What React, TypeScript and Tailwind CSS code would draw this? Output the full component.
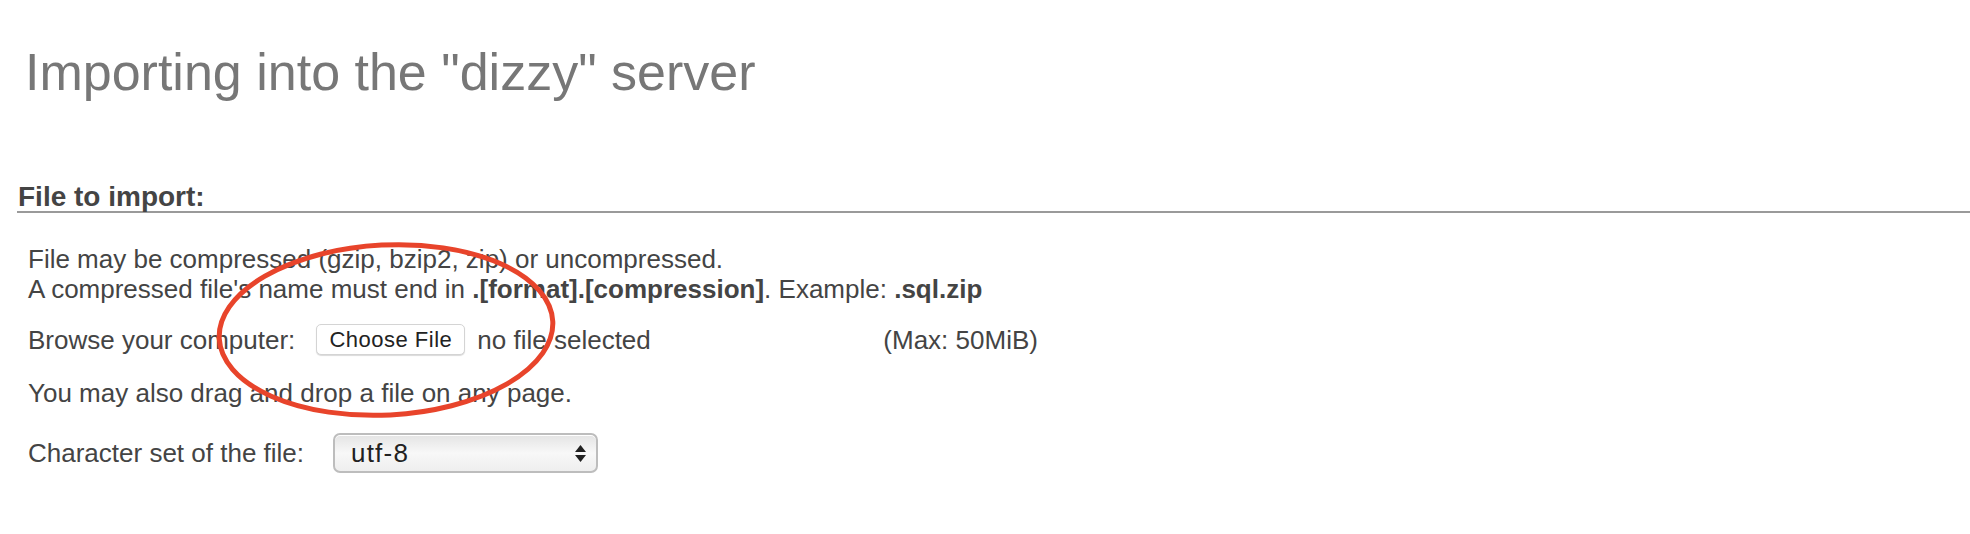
import React from 'react'

export default function App() {
  return (
    <div className="relative min-h-[534px] bg-white font-['Liberation_Sans',Arial,sans-serif] text-[#444]">
      <h2 className="pl-[25px] pt-[42px] text-[52px] leading-[60px] text-[#777]">Importing into the "dizzy" server</h2>

      <div className="mt-[81px]">
        <div className="ml-[17px] border-b-2 border-[#9a9a9a] pl-px text-[28px] font-bold leading-[28px] text-[#444]">
          File to import:
        </div>

        <div className="pl-[28px] text-[26px] leading-[30px]">
          <div className="mt-[31px]">
            File may be compressed (gzip, bzip2, zip) or uncompressed.
            <br />
            A compressed file's name must end in <b>.[format].[compression]</b>. Example: <b>.sql.zip</b>
          </div>

          <div className="mt-[20px] flex h-[31px] items-center">
            <span>Browse your computer:</span>
            <div className="ml-[21px] flex w-[567px] items-center">
              <button className="h-[31px] w-[149px] rounded-[5px] border border-[#d4d4d4] bg-white text-[22px] tracking-[0.5px] text-[#222] shadow-[0_1px_1px_rgba(0,0,0,0.15)]">
                Choose File
              </button>
              <span className="ml-[12px]">no file selected</span>
            </div>
            <span>(Max: 50MiB)</span>
          </div>

          <div className="mt-[23px]">You may also drag and drop a file on any page.</div>

          <div className="mt-[25px] flex h-[40px] items-center">
            <span>Character set of the file:</span>
            <div className="ml-[29px] flex h-[40px] w-[265px] items-center justify-between rounded-[7px] border-2 border-[#bdbdbd] bg-gradient-to-b from-[#e4e4e4] via-[#f8f8f8] to-[#eeeeee] pl-[16px] pr-[9px] shadow-[inset_0_1px_0_#fff]">
              <span className="text-[26px] tracking-[1.2px] text-[#222]">utf-8</span>
              <svg width="13" height="19" viewBox="0 0 13 19">
                <path d="M6.5 1 L12 8 H1 Z" fill="#222" />
                <path d="M6.5 18 L12 11 H1 Z" fill="#222" />
              </svg>
            </div>
          </div>
        </div>
      </div>

      <svg className="pointer-events-none absolute left-[212px] top-[238px]" width="350" height="184" viewBox="0 0 350 184">
        <ellipse cx="174" cy="92" rx="167" ry="85" fill="none" stroke="#e8442b" strokeWidth="5" transform="rotate(-3 174 92)" />
      </svg>
    </div>
  )
}
